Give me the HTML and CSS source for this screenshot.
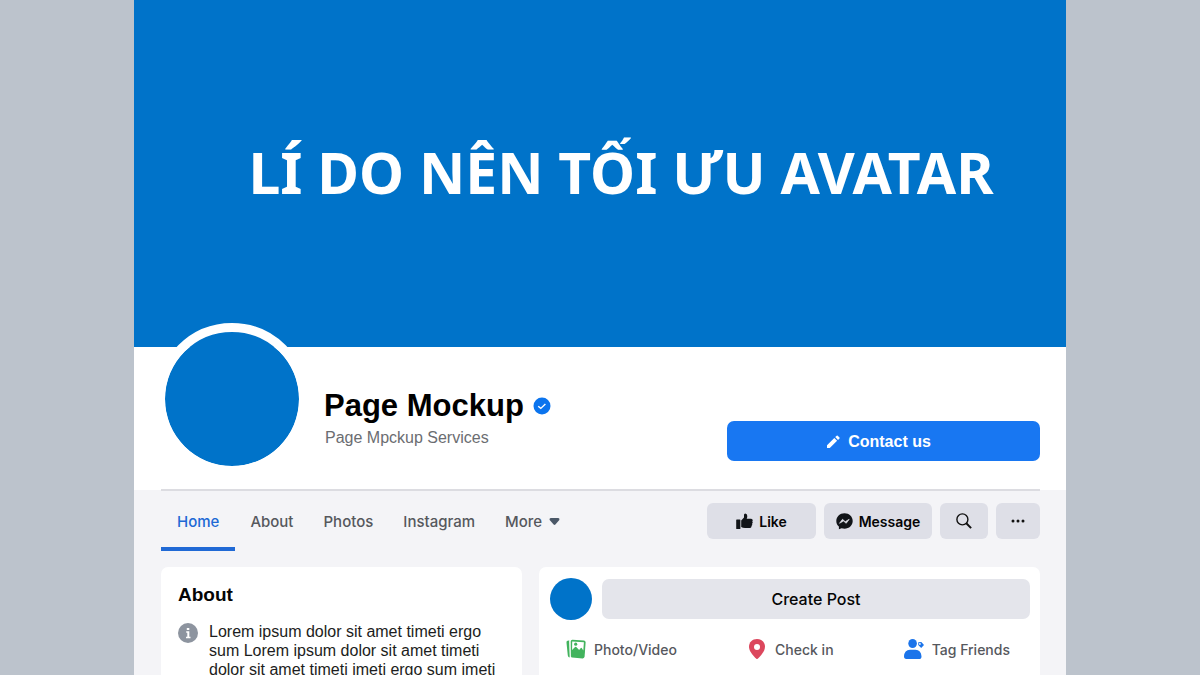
FILE: index.html
```html
<!DOCTYPE html>
<html lang="vi">
<head>
<meta charset="utf-8">
<meta name="viewport" content="width=device-width, initial-scale=1">
<title>Page Mockup</title>
<link rel="stylesheet" href="styles.css">
</head>
<body>
<div class="page">
  <header class="cover">
    <h2 class="cover-title">LÍ DO NÊN TỐI ƯU AVATAR</h2>
  </header>

  <section class="profile">
    <div class="avatar"></div>
    <div class="identity">
      <h1 class="name">Page Mockup
        <svg class="verified" viewBox="0 0 18 18" aria-hidden="true"><circle cx="9" cy="9" r="8.5" fill="#0b74ee"/><path d="M5.2 9.2l2.6 2.2 4.6-4.4" fill="none" stroke="#fff" stroke-width="1.4"/></svg>
      </h1>
      <p class="category">Page Mpckup Services</p>
    </div>
    <button class="contact" type="button">
      <svg class="pencil" viewBox="0 0 14 14" aria-hidden="true"><path d="M1 10.2L8.3 3l2.8 2.8L3.8 13H1zM9.2 2.1l1.5-1.4q.5-.4 1 0l1.8 1.8q.4.5 0 1L12 4.9z" fill="#fff"/></svg>
      Contact us
    </button>
  </section>

  <div class="content">
    <div class="toolbar">
      <nav class="tabs">
        <a class="tab active" href="#home">Home</a>
        <a class="tab" href="#about">About</a>
        <a class="tab" href="#photos">Photos</a>
        <a class="tab" href="#instagram">Instagram</a>
        <a class="tab" href="#more">More
          <svg class="caret" viewBox="0 0 10 8" aria-hidden="true"><path d="M1.500.8h7q1.500.2.9 1.900L5.800 6.800q-.8.8-1.600 0L.6 2.700Q0 1 1.500.8z" fill="#4b5868"/></svg>
        </a>
      </nav>
      <div class="actions">
        <button class="action like" type="button">
          <svg class="thumb" viewBox="0 0 17 17" aria-hidden="true"><path d="M.8 6.500h3q.6 0 .6.6v8.300q0 .7-.6.7h-3q-.6 0-.6-.7V7.100q0-.6.6-.6zM5.200 7.500L8 4.500V2Q8 .4 9.200.4q2.100.2 2.100 2.700 0 1.400-.6 2.700h4.400q1.600.1 1.600 1.500 0 .7-.5 1.100.6.500.5 1.400-.1.700-.7 1 .4.500.2 1.200-.2.700-.8.900.2.500 0 1.100-.4 1.100-1.600 1.100H9q-2.300 0-3.800-1.100z" fill="#111418"/></svg>
          Like
        </button>
        <button class="action message" type="button">
          <svg class="messenger" viewBox="0 0 17 17" aria-hidden="true"><path d="M8.500.3C3.800.3.300 3.700.300 8c0 2.300 1 4.300 2.600 5.600v2.700l2.700-1.100c.9.300 1.900.5 2.900.5 4.700 0 8.200-3.300 8.200-7.700S13.200.3 8.500.3z" fill="#111418"/><path d="M3.500 10.300l3-4 2.700 2.400 4-2.400-3 4-2.700-2.300z" fill="#dedfe7" stroke="#dedfe7" stroke-width=".7" stroke-linejoin="round"/></svg>
          Message
        </button>
        <button class="action search" type="button" aria-label="Search">
          <svg class="lens" viewBox="0 0 16 16" aria-hidden="true"><circle cx="6.400" cy="6.400" r="5.500" fill="none" stroke="#111" stroke-width="1.400"/><path d="M10.300 10.300l4.800 4.800" stroke="#111" stroke-width="2"/></svg>
        </button>
        <button class="action menu" type="button" aria-label="More options">
          <svg class="dots" viewBox="0 0 14 4" aria-hidden="true"><g fill="#111"><circle cx="2" cy="2" r="1.500"/><circle cx="7" cy="2" r="1.500"/><circle cx="12" cy="2" r="1.500"/></g></svg>
        </button>
      </div>
    </div>

    <main class="columns">
      <section class="card about">
        <h2 class="card-title">About</h2>
        <div class="info">
          <svg class="info-icon" viewBox="0 0 20 20" aria-hidden="true"><circle cx="10" cy="10" r="10" fill="#8d949f"/><path d="M8.800 5h2.500v2.100H8.800zM8.200 8.300h3.100v5.400h1.200v1.500H8v-1.500h1.300V9.800H8.200z" fill="#fff"/></svg>
          <p class="info-text">Lorem ipsum dolor sit amet timeti ergo sum Lorem ipsum dolor sit amet timeti dolor sit amet timeti imeti ergo sum imeti</p>
        </div>
      </section>

      <section class="card composer">
        <div class="compose-row">
          <div class="mini-avatar"></div>
          <button class="create" type="button">Create Post</button>
        </div>
        <div class="options">
          <button class="option" type="button">
            <svg class="option-icon" viewBox="0 0 20 20" aria-hidden="true"><path d="M3.300 1.500Q.2 1.300.5 3.800l1.300 12.800q.3 1.800 1.900 1.900L3.300 4z" fill="#42b35d"/><path d="M6.500.8l11.300.8q1.900.2 1.800 2l-1 14q-.2 1.900-2 1.800l-10.500-.9q-1.800-.2-1.800-2L4.600 2.600Q4.800.7 6.500.8z" fill="#42b35d"/><path d="M6.200 2.400l11.700.8-.6 8.200-1.400-2.200q-.6-.8-1.300 0l-1.500 1.900-2.800-3q-.8-.8-1.500.1L6.100 11z" fill="#fff"/><circle cx="9.700" cy="5.200" r="1.600" fill="#42b35d"/><path d="M3.900 2l.7 16.400" stroke="#fff" stroke-width=".8"/></svg>
            Photo/Video
          </button>
          <button class="option" type="button">
            <svg class="option-icon" viewBox="0 0 20 20" aria-hidden="true"><path d="M10 0C5.300 0 2 3.400 2 7.700c0 4.200 3.700 8.500 7.300 12q.7.600 1.400 0c3.600-3.500 7.300-7.800 7.300-12C18 3.400 14.700 0 10 0z" fill="#dc475d"/><circle cx="10" cy="7.900" r="3" fill="#fff"/></svg>
            Check in
          </button>
          <button class="option" type="button">
            <svg class="option-icon" viewBox="0 0 20 20" aria-hidden="true"><g fill="#1b74ea"><ellipse cx="8.600" cy="4.500" rx="4.300" ry="4.500"/><path d="M6 10.700h5.500q5.500.3 6 6.500.1 2.800-2.300 2.800H2.300Q0 20 0 17.300q.4-6.300 6-6.600zM14.300 3.200l3-.2 2.700 3-2.800 3-3-2.900z"/></g><circle cx="15.900" cy="4.900" r=".9" fill="#fff"/></svg>
            Tag Friends
          </button>
        </div>
      </section>
    </main>
  </div>
</div>
</body>
</html>
```
FILE: styles.css
```css
* {
  box-sizing: border-box;
}

body {
  margin: 0;
  background: #bcc3cc;
  font-family: Inter, "Liberation Sans", sans-serif;
  color: #050505;
}

h1, h2, p {
  margin: 0;
}

button {
  border: 0;
  padding: 0;
  font: inherit;
  color: inherit;
  cursor: pointer;
}

svg {
  flex: none;
  display: block;
}

.page {
  max-width: 932px;
  min-height: 100vh;
  margin: 0 auto;
  background: #f4f4f7;
}

.cover {
  display: flex;
  align-items: center;
  justify-content: center;
  height: 347px;
  padding: 0 0 3px 42px;
  background: #0073c9;
}

.cover-title {
  font: 700 57px/78px "Noto Sans", sans-serif;
  color: #fff;
}

.profile {
  display: flex;
  align-items: flex-start;
  height: 143px;
  padding: 0 26px 0 22px;
  background: #fff;
}

.avatar {
  flex: none;
  width: 152px;
  height: 152px;
  margin-top: -24px;
  border: 9px solid #fff;
  border-radius: 50%;
  background: #0073c9;
  background-clip: padding-box;
}

.identity {
  flex: 1;
  padding: 39px 0 0 16px;
  font-family: "Liberation Sans", Arial, sans-serif;
}

.name {
  display: flex;
  align-items: center;
  gap: 9px;
  font-size: 31px;
  line-height: 40px;
  color: #000;
}

.verified {
  width: 18px;
  height: 18px;
}

.category {
  padding-left: 1px;
  font-size: 16px;
  line-height: 23px;
  color: #6b6d71;
}

.contact {
  display: flex;
  align-items: center;
  justify-content: center;
  gap: 8px;
  width: 313px;
  height: 40px;
  margin-top: 74px;
  padding: 2px 10px 0 0;
  border-radius: 7px;
  background: #1877f2;
  font: 700 16px/20px "Liberation Sans", Arial, sans-serif;
  color: #fff;
}

.pencil {
  width: 14px;
  height: 14px;
}

.content {
  padding: 0 26px 0 27px;
}

.toolbar {
  display: flex;
  justify-content: space-between;
  margin-top: -1px;
  border-top: 2px solid #dcdce1;
}

.tabs {
  display: flex;
}

.tab {
  display: flex;
  align-items: center;
  gap: 7px;
  height: 60px;
  padding: 4px 15px 0;
  border-bottom: 4px solid transparent;
  font-size: 15px;
  font-weight: 500;
  color: #56585d;
  text-decoration: none;
}

.tab.active {
  padding: 4px 16px 0;
  border-color: #2069d5;
  color: #2069d5;
}

.caret {
  width: 11px;
  height: 9px;
}

.actions {
  display: flex;
  gap: 8px;
  padding-top: 12px;
}

.action {
  display: flex;
  align-items: center;
  justify-content: center;
  gap: 6px;
  height: 36px;
  border-radius: 6px;
  background: #dedfe7;
  font-size: 14px;
  font-weight: 600;
}

.like { width: 109px; }
.message { width: 108px; }
.search { width: 48px; }
.menu { width: 44px; }

.thumb,
.messenger {
  width: 17px;
  height: 17px;
}

.lens {
  width: 16px;
  height: 16px;
}

.dots {
  width: 14px;
  height: 4px;
}

.columns {
  display: grid;
  grid-template-columns: 361fr 501fr;
  gap: 17px;
  padding-top: 16px;
}

.card {
  border-radius: 7px;
  background: #fff;
}

.about {
  padding: 16px 17px;
  font-family: "Liberation Sans", Arial, sans-serif;
}

.card-title {
  font-size: 19px;
  line-height: 24px;
}

.info {
  display: flex;
  gap: 11px;
  padding-top: 15px;
}

.info-icon {
  width: 20px;
  height: 20px;
  margin-top: 1px;
}

.info-text {
  font-size: 16px;
  line-height: 19px;
  color: #1c1d20;
}

.composer {
  padding: 11px 10px 11px 11px;
}

.compose-row {
  display: flex;
  align-items: center;
  gap: 10px;
}

.mini-avatar {
  width: 42px;
  height: 42px;
  border-radius: 50%;
  background: #0073c9;
}

.create {
  flex: 1;
  height: 40px;
  border-radius: 7px;
  background: #e4e5eb;
  font-size: 16px;
  font-weight: 500;
}

.options {
  display: flex;
  justify-content: space-between;
  padding: 18px 20px 0 16px;
}

.option {
  display: flex;
  align-items: center;
  gap: 8px;
  height: 22px;
  background: none;
  font-size: 14px;
  font-weight: 500;
  color: #56585d;
}

.option-icon {
  width: 20px;
  height: 20px;
}
```
